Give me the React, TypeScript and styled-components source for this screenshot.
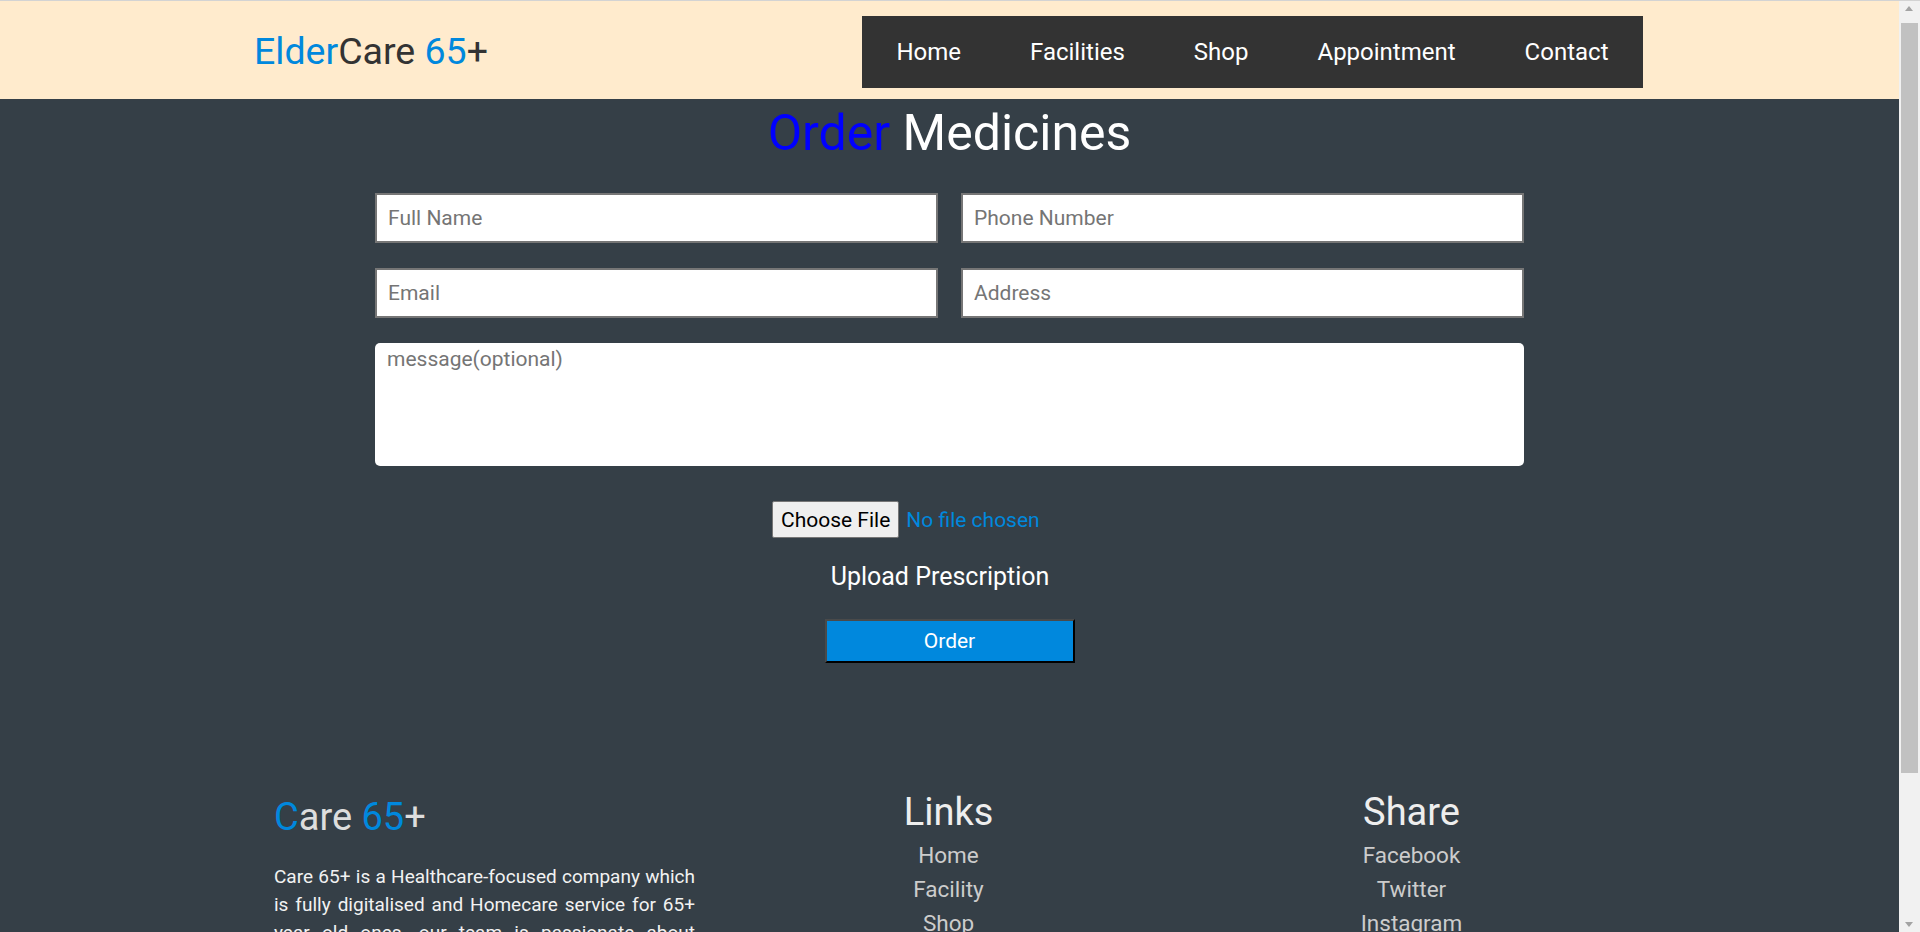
import React from "react";
import styled, { createGlobalStyle } from "styled-components";

const blue = "#0088dd";

const GlobalStyle = createGlobalStyle`
  html, body {
    margin: 0;
    padding: 0;
  }
  body {
    background: #353f47;
    font-family: Roboto, "Liberation Sans", Arial, sans-serif;
  }
  * {
    box-sizing: border-box;
  }
`;

// the page leaves room for the (drawn) browser scrollbar on the right
const Page = styled.div`
  margin-right: 21px;
`;

const ScrollTrack = styled.div`
  position: fixed;
  top: 0;
  right: 0;
  bottom: 0;
  width: 21px;
  background: #f1f1f1;
  border-top: 1px solid #d3d3d3;
`;

const ScrollArrow = styled.div<{ $down?: boolean }>`
  position: absolute;
  left: 6px;
  ${p => (p.$down ? "bottom: 5px;" : "top: 5px;")}
  width: 0;
  height: 0;
  border-left: 4.5px solid transparent;
  border-right: 4.5px solid transparent;
  ${p =>
    p.$down
      ? "border-top: 5px solid #a3a3a3;"
      : "border-bottom: 5px solid #a3a3a3;"}
`;

const ScrollThumb = styled.div`
  position: absolute;
  top: 22px;
  left: 2px;
  right: 2px;
  height: 750px;
  background: #c1c1c1;
`;

const Header = styled.header`
  height: 99px;
  border-top: 1px solid #d3d3d3;
  background: #ffebcd;
  padding: 0 256px 0 254px;
  display: flex;
  align-items: center;
  justify-content: space-between;
`;

const Logo = styled.div`
  font-size: 37.5px;
  color: #333;
  margin-top: 2px;
`;

const Accent = styled.span<{ $color?: string }>`
  color: ${p => p.$color || blue};
`;

const Nav = styled.nav`
  display: flex;
  align-items: center;
  height: 72px;
  margin-top: 3px;
  background: #333;
`;

const NavLink = styled.a`
  padding: 0 34.5px;
  color: #fff;
  font-size: 24px;
  text-decoration: none;
  cursor: pointer;
`;

const Main = styled.main`
  padding-top: 5px;
  display: flex;
  flex-direction: column;
  align-items: center;
`;

const Title = styled.h1`
  margin: 0 0 31px;
  font-size: 50px;
  font-weight: 400;
  line-height: normal;
  color: #fff;
`;

const Form = styled.form`
  width: 1149px;
  display: grid;
  grid-template-columns: 1fr 1fr;
  column-gap: 23px;
  row-gap: 25px;
`;

const Field = styled.input`
  height: 50px;
  padding: 0 11px;
  border: 2px solid #767676;
  border-radius: 0;
  background: #fff;
  font-family: inherit;
  font-size: 21px;
  outline: none;

  &::placeholder {
    color: #757575;
  }
`;

const Message = styled.textarea`
  grid-column: span 2;
  height: 123px;
  padding: 4px 12px;
  border: none;
  border-radius: 5px;
  background: #fff;
  font-family: inherit;
  font-size: 21px;
  resize: none;
  outline: none;

  &::placeholder {
    color: #757575;
  }
`;

const FileRow = styled.label`
  width: 355px;
  margin-top: 35px;
  display: flex;
  align-items: center;
  gap: 7px;
  cursor: pointer;

  input {
    display: none;
  }
`;

const FileButton = styled.span`
  height: 37px;
  padding: 0 8px;
  display: flex;
  align-items: center;
  background: #efefef;
  border: 1px solid #767676;
  border-radius: 2px;
  color: #000;
  font-size: 21px;
`;

const FileName = styled.span`
  color: ${blue};
  font-size: 21px;
`;

const UploadLabel = styled.p`
  margin: 24px 0 0;
  padding-right: 19px;
  color: #fff;
  font-size: 25px;
  line-height: normal;
`;

const OrderButton = styled.button`
  margin-top: 28px;
  width: 250px;
  height: 44px;
  background: ${blue};
  color: #fff;
  font-family: inherit;
  font-size: 21px;
  border: 2px solid #000;
  border-top-color: #4a4a4a;
  border-left-color: #4a4a4a;
  cursor: pointer;
`;

const Footer = styled.footer`
  padding: 127px 256px 0 254px;
`;

const Columns = styled.div`
  display: grid;
  grid-template-columns: repeat(3, 1fr);
`;

const Column = styled.div<{ $left?: boolean }>`
  display: flex;
  flex-direction: column;
  align-items: ${p => (p.$left ? "flex-start" : "center")};
  padding: ${p => (p.$left ? "5px 22px 0 20px" : "0")};
`;

const FooterHeading = styled.h2<{ $gap?: number }>`
  margin: 0 0 ${p => p.$gap ?? 4}px;
  font-size: 38px;
  font-weight: 400;
  line-height: normal;
  color: #eee;
`;

const About = styled.p`
  margin: 0;
  color: #f2f2f2;
  font-size: 19px;
  line-height: 28px;
  text-align: justify;
`;

const FooterLink = styled.a`
  color: #ccc;
  font-size: 22.5px;
  line-height: 34px;
  text-decoration: none;
  cursor: pointer;
`;

const Copy = styled.p`
  margin: 0;
  padding: 40px 0 44px;
  text-align: center;
  color: #bbb;
  font-size: 16px;
`;

const navItems = ["Home", "Facilities", "Shop", "Appointment", "Contact"];
const links = ["Home", "Facility", "Shop", "Appointment", "Contact"];
const shares = ["Facebook", "Twitter", "Instagram", "LinkedIn"];

export default function App() {
  return (
    <>
      <GlobalStyle />
      <Page>
        <Header>
          <Logo>
            <Accent>Elder</Accent>Care <Accent>65</Accent>+
          </Logo>
          <Nav>
            {navItems.map(item => (
              <NavLink key={item}>{item}</NavLink>
            ))}
          </Nav>
        </Header>

        <Main>
          <Title>
            <Accent $color="#0000ff">Order</Accent> Medicines
          </Title>
          <Form onSubmit={e => e.preventDefault()}>
            <Field type="text" placeholder="Full Name" />
            <Field type="tel" placeholder="Phone Number" />
            <Field type="email" placeholder="Email" />
            <Field type="text" placeholder="Address" />
            <Message placeholder="message(optional)" />
          </Form>
          <FileRow>
            <input type="file" />
            <FileButton>Choose File</FileButton>
            <FileName>No file chosen</FileName>
          </FileRow>
          <UploadLabel>Upload Prescription</UploadLabel>
          <OrderButton type="button">Order</OrderButton>
        </Main>

        <Footer>
          <Columns>
            <Column $left>
              <FooterHeading $gap={24}>
                <Accent>C</Accent>
                <Accent $color="#ddd">are </Accent>
                <Accent>65</Accent>
                <Accent $color="#ddd">+</Accent>
              </FooterHeading>
              <About>
                Care 65+ is a Healthcare-focused company which is fully
                digitalised and Homecare service for 65+ year old ones. our
                team is passionate about providing the best care and support
                to our elders, right at the comfort of their homes.
              </About>
            </Column>
            <Column>
              <FooterHeading>Links</FooterHeading>
              {links.map(l => (
                <FooterLink key={l}>{l}</FooterLink>
              ))}
            </Column>
            <Column>
              <FooterHeading>Share</FooterHeading>
              {shares.map(s => (
                <FooterLink key={s}>{s}</FooterLink>
              ))}
            </Column>
          </Columns>
          <Copy>© 2023 Care 65+. All rights reserved.</Copy>
        </Footer>
      </Page>

      <ScrollTrack>
        <ScrollArrow />
        <ScrollThumb />
        <ScrollArrow $down />
      </ScrollTrack>
    </>
  );
}
